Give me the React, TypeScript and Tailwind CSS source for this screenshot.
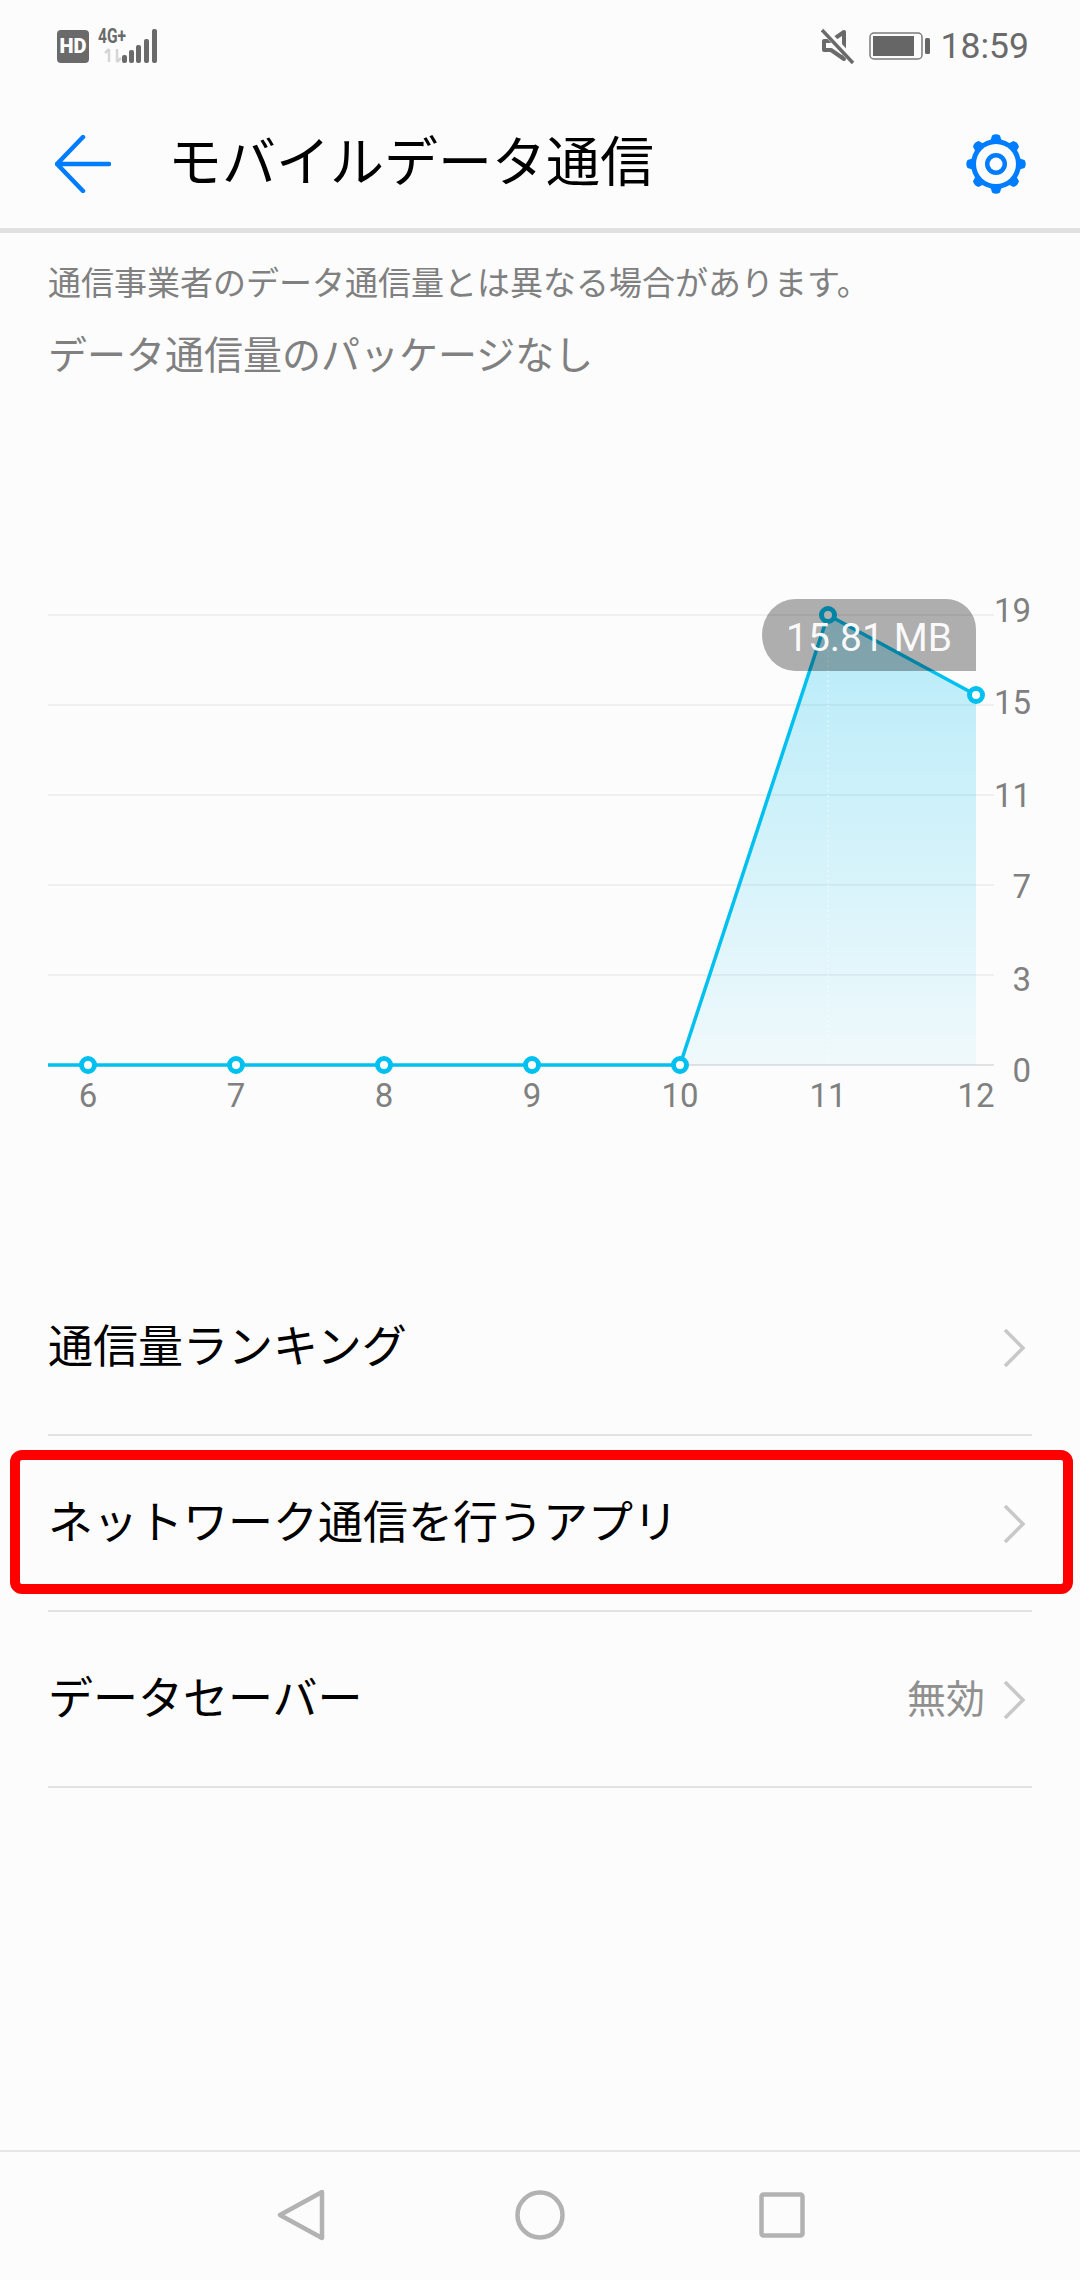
import React from "react";

const BLUE = "#007DFF";
const CYAN = "#00C0F0";

function StatusBar() {
  return (
    <div className="h-[92px] flex items-start justify-between pl-[57px] pr-[51px] pt-[18px]">
      <div className="flex items-start">
        <svg width="104" height="46" viewBox="0 -10 104 46">
          <rect x="0" y="2" width="32" height="33" rx="4" fill="#6a6a6a" />
          <text x="16" y="25" textAnchor="middle" fontFamily="Roboto" fontWeight="900" fontSize="20" fill="#fff">HD</text>
          <text x="41" y="15" fontFamily="Roboto" fontWeight="700" fontSize="20" fill="#6a6a6a" textLength="28" lengthAdjust="spacingAndGlyphs">4G+</text>
          <path d="M52 21v13M48 25l4-4M60 21v13M64 30l-4 4" stroke="#d5d5d5" strokeWidth="2.5" fill="none" />
          <rect x="65" y="27" width="5" height="8" rx="2" fill="#6a6a6a" />
          <rect x="72" y="22" width="5" height="13" rx="2" fill="#6a6a6a" />
          <rect x="79" y="17" width="5" height="18" rx="2" fill="#6a6a6a" />
          <rect x="87" y="11" width="5" height="24" rx="2" fill="#6a6a6a" />
          <rect x="95" y="1" width="5" height="34" rx="2" fill="#6a6a6a" />
        </svg>
      </div>
      <div className="flex items-center h-[36px] mt-[10px]">
        <svg width="34" height="36" viewBox="0 0 34 36" className="mr-[14px]">
          <path d="M3 13h7l13-9v27l-13-9H3z" fill="none" stroke="#6a6a6a" strokeWidth="4" strokeLinejoin="round" />
          <path d="M2 1l31 33" stroke="#fcfcfc" strokeWidth="7" />
          <path d="M1 2l31 33" stroke="#6a6a6a" strokeWidth="3.5" />
        </svg>
        <svg width="62" height="28" viewBox="0 0 62 28" className="mr-[10px]">
          <rect x="1" y="1" width="52" height="26" rx="4" fill="none" stroke="#7a7a7a" strokeWidth="1.5" />
          <rect x="4" y="4" width="41" height="20" fill="#666" />
          <rect x="56" y="6" width="5" height="16" rx="1.5" fill="#666" />
        </svg>
        <span className="font-['Roboto'] text-[35.5px] leading-[36px] text-[#6a6a6a]">18:59</span>
      </div>
    </div>
  );
}

function Gear() {
  const teeth = [0, 45, 90, 135, 180, 225, 270, 315];
  return (
    <svg width="60" height="60" viewBox="0 0 60 60">
      {teeth.map((a) => (
        <path key={a} d="M24 8 L26 1.5 Q30 -1 34 1.5 L36 8 Z" fill={BLUE} transform={`rotate(${a} 30 30)`} />
      ))}
      <circle cx="30" cy="30" r="25" fill={BLUE} />
      <circle cx="30" cy="30" r="20" fill="#fcfcfc" />
      <circle cx="30" cy="30" r="11" fill={BLUE} />
      <circle cx="30" cy="30" r="6.5" fill="#fcfcfc" />
    </svg>
  );
}

function Header() {
  return (
    <div className="h-[141px] border-b-[5px] border-[#e0e0e0] flex items-center pl-[55px] pr-[54px] pt-[7px]">
      <svg width="56" height="58" viewBox="0 0 56 58" className="shrink-0">
        <path d="M28 2 L2 29 L28 56 M2 29 H54" fill="none" stroke={BLUE} strokeWidth="4.5" strokeLinecap="round" strokeLinejoin="round" />
      </svg>
      <div className="ml-[57px] flex-1 text-[54px] leading-[64px] text-black">モバイルデータ通信</div>
      <Gear />
    </div>
  );
}

function Chart() {
  const grid = [615, 705, 795, 885, 975];
  const xs = [88, 236, 384, 532, 680, 828, 976];
  const yLabels: [string, number][] = [["19", 610], ["15", 702], ["11", 795], ["7", 886], ["3", 979], ["0", 1070]];
  const fontProps = { fontFamily: "Roboto", fontSize: 33, fill: "#808080" };
  return (
    <svg width="1080" height="530" viewBox="0 590 1080 530" className="block">
      <defs>
        <linearGradient id="area" x1="0" y1="0" x2="0" y2="1">
          <stop offset="0" stopColor="#00C0F0" stopOpacity="0.28" />
          <stop offset="1" stopColor="#00C0F0" stopOpacity="0.05" />
        </linearGradient>
      </defs>
      {grid.map((y) => (
        <line key={y} x1="48" x2="994" y1={y} y2={y} stroke="#f0f0f0" strokeWidth="2" />
      ))}
      <line x1="48" x2="994" y1="1065" y2="1065" stroke="#e2e2e2" strokeWidth="2" />
      <path d="M680 1065 L828 615 L976 695 V1065 Z" fill="url(#area)" />
      <line x1="828" x2="828" y1="625" y2="1065" stroke="#fff" strokeWidth="1.5" strokeDasharray="2 3" opacity="0.45" />
      <polyline points="48,1065 680,1065 828,615 976,695" fill="none" stroke={CYAN} strokeWidth="3.5" />
      {xs.map((x, i) => (
        <circle key={x} cx={x} cy={i === 5 ? 615 : i === 6 ? 695 : 1065} r="6.5" fill="#fff" stroke={CYAN} strokeWidth="5" />
      ))}
      {xs.map((x, i) => (
        <text key={x} x={x} y="1107" textAnchor="middle" {...fontProps}>{i + 6}</text>
      ))}
      {yLabels.map(([t, y]) => (
        <text key={t} x="1031" y={y + 12} textAnchor="end" {...fontProps}>{t}</text>
      ))}
      <path d="M795 599 H946 A30 30 0 0 1 976 629 V671 H795 A33 36 0 0 1 795 599 Z" fill="#000" fillOpacity="0.31" />
      <text x="869" y="651" textAnchor="middle" fontFamily="Roboto" fontSize="39" fill="#fff" fillOpacity="0.95">15.81 MB</text>
    </svg>
  );
}

function Chevron() {
  return (
    <svg width="24" height="40" viewBox="0 0 24 40" className="shrink-0">
      <path d="M3 2 L21 20 L3 38" fill="none" stroke="#c8c8c8" strokeWidth="3.5" />
    </svg>
  );
}

function Row({ label, value, boxed }: { label: string; value?: string; boxed?: boolean }) {
  return (
    <div className="relative mx-[48px] h-[176px] border-b-2 border-[#e2e2e2] flex items-center justify-between pr-[6px] pt-[2px]">
      <span className="text-[45px] leading-[60px] text-black">{label}</span>
      <div className="flex items-center gap-[17px]">
        {value && <span className="text-[39px] leading-[48px] text-[#909090]">{value}</span>}
        <Chevron />
      </div>
      {boxed && (
        <div className="absolute left-[-38px] right-[-41px] top-[14px] h-[144px] border-[10px] border-[#ff0000] rounded-[12px]" />
      )}
    </div>
  );
}

function NavBar() {
  return (
    <div className="mt-auto h-[130px] border-t-2 border-[#e6e6e6] flex items-center justify-center">
      <div className="flex items-center mt-[-3px]">
        <svg width="48" height="52" viewBox="0 0 48 52" className="mr-[190px]">
          <path d="M45 3 L3 26 L45 49 Z" fill="none" stroke="#b2b2b2" strokeWidth="4.5" strokeLinejoin="round" />
        </svg>
        <svg width="50" height="50" viewBox="0 0 50 50" className="mr-[194px]">
          <circle cx="25" cy="25" r="22.5" fill="none" stroke="#b2b2b2" strokeWidth="4.5" />
        </svg>
        <svg width="46" height="46" viewBox="0 0 46 46" className="mr-[-2px]">
          <rect x="2.5" y="2.5" width="41" height="41" rx="2" fill="none" stroke="#b2b2b2" strokeWidth="4.5" />
        </svg>
      </div>
    </div>
  );
}

export default function App() {
  return (
    <div className="w-[1080px] h-[2280px] bg-[#fcfcfc] flex flex-col overflow-hidden font-['Roboto','Noto_Sans_CJK_JP',sans-serif]">
      <StatusBar />
      <Header />
      <div className="px-[48px] pt-[27px]">
        <div className="text-[33px] leading-[48px] text-[#808080]">通信事業者のデータ通信量とは異なる場合があります。</div>
        <div className="mt-[24px] text-[39px] leading-[48px] text-[#808080]">データ通信量のパッケージなし</div>
      </div>
      <div className="mt-[210px]">
        <Chart />
      </div>
      <div className="mt-[140px]">
        <Row label="通信量ランキング" />
        <Row label="ネットワーク通信を行うアプリ" boxed />
        <Row label="データセーバー" value="無効" />
      </div>
      <NavBar />
    </div>
  );
}
